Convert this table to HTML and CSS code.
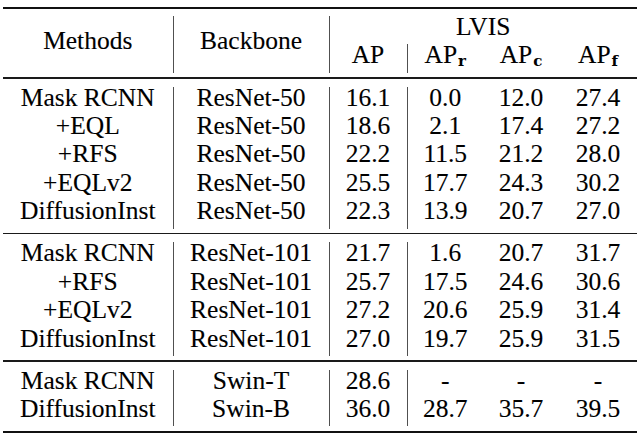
FILE: index.html
```html
<!DOCTYPE html>
<html>
<head>
<meta charset="utf-8">
<link rel="stylesheet" href="styles.css">
</head>
<body>
<table class="results">
  <colgroup>
    <col class="c-method"><col class="c-backbone"><col class="c-ap"><col class="c-apr"><col class="c-apc"><col class="c-apf">
  </colgroup>
  <tbody>
    <tr class="rule rule-top"><td colspan="6"><div class="line heavy"></div></td></tr>
    <tr>
      <th rowspan="2" class="span2">Methods</th>
      <th rowspan="2" class="span2 vl">Backbone</th>
      <th colspan="4" class="vl">LVIS</th>
    </tr>
    <tr>
      <th class="vl">AP</th>
      <th class="vl">AP<sub>r</sub></th>
      <th>AP<sub>c</sub></th>
      <th>AP<sub>f</sub></th>
    </tr>
    <tr class="rule"><td colspan="6"><div class="line"></div></td></tr>

    <tr><td>Mask RCNN</td><td class="vl">ResNet-50</td><td class="vl">16.1</td><td class="vl">0.0</td><td>12.0</td><td>27.4</td></tr>
    <tr><td>+EQL</td><td class="vl">ResNet-50</td><td class="vl">18.6</td><td class="vl">2.1</td><td>17.4</td><td>27.2</td></tr>
    <tr><td>+RFS</td><td class="vl">ResNet-50</td><td class="vl">22.2</td><td class="vl">11.5</td><td>21.2</td><td>28.0</td></tr>
    <tr><td>+EQLv2</td><td class="vl">ResNet-50</td><td class="vl">25.5</td><td class="vl">17.7</td><td>24.3</td><td>30.2</td></tr>
    <tr><td>DiffusionInst</td><td class="vl">ResNet-50</td><td class="vl">22.3</td><td class="vl">13.9</td><td>20.7</td><td>27.0</td></tr>
    <tr class="rule"><td colspan="6"><div class="line"></div></td></tr>

    <tr><td>Mask RCNN</td><td class="vl">ResNet-101</td><td class="vl">21.7</td><td class="vl">1.6</td><td>20.7</td><td>31.7</td></tr>
    <tr><td>+RFS</td><td class="vl">ResNet-101</td><td class="vl">25.7</td><td class="vl">17.5</td><td>24.6</td><td>30.6</td></tr>
    <tr><td>+EQLv2</td><td class="vl">ResNet-101</td><td class="vl">27.2</td><td class="vl">20.6</td><td>25.9</td><td>31.4</td></tr>
    <tr><td>DiffusionInst</td><td class="vl">ResNet-101</td><td class="vl">27.0</td><td class="vl">19.7</td><td>25.9</td><td>31.5</td></tr>
    <tr class="rule"><td colspan="6"><div class="line"></div></td></tr>

    <tr><td>Mask RCNN</td><td class="vl">Swin-T</td><td class="vl">28.6</td><td class="vl">-</td><td>-</td><td>-</td></tr>
    <tr><td>DiffusionInst</td><td class="vl">Swin-B</td><td class="vl">36.0</td><td class="vl">28.7</td><td>35.7</td><td>39.5</td></tr>
    <tr class="rule rule-bottom"><td colspan="6"><div class="line heavy"></div></td></tr>
  </tbody>
</table>
</body>
</html>
```

FILE: styles.css
```css
html, body {
  margin: 0;
  padding: 0;
  background: #ffffff;
}

body {
  font-family: "Liberation Serif", "Times New Roman", serif;
  font-size: 25.5px;
  color: #000000;
}

.results {
  border-collapse: collapse;
  border-spacing: 0;
  table-layout: fixed;
  width: 634px;
  margin: 6.5px 0 0 3px;
  -webkit-text-stroke: 0.12px #000000;
}

.c-method { width: 170px; }
.c-backbone { width: 156px; }
.c-ap { width: 78px; }
.c-apr { width: 76px; }
.c-apc { width: 76px; }
.c-apf { width: 78px; }

.results th,
.results td {
  font-weight: normal;
  text-align: center;
  vertical-align: top;
  white-space: nowrap;
  line-height: 22.6px;
  padding: 0 0 5.8px 0;
}

.results th.span2 {
  padding-top: 14px;
}

.results .vl {
  border-left: 1px solid #505050;
}

.results sub {
  font-family: "DejaVu Serif", "Liberation Serif", serif;
  font-weight: bold;
  font-size: 15px;
  line-height: 0;
  vertical-align: -3px;
  margin-left: 1px;
  -webkit-text-stroke: 0;
}

.results tr.rule td {
  padding: 4.5px 0 8px 0;
  line-height: 0;
}

.results tr.rule-top td {
  padding: 0 0 7.5px 0;
}

.results tr.rule-bottom td {
  padding: 4.5px 0 0 0;
}

.line {
  height: 1.3px;
  background: #1a1a1a;
}

.line.heavy {
  height: 2px;
  background: #111111;
}
```
